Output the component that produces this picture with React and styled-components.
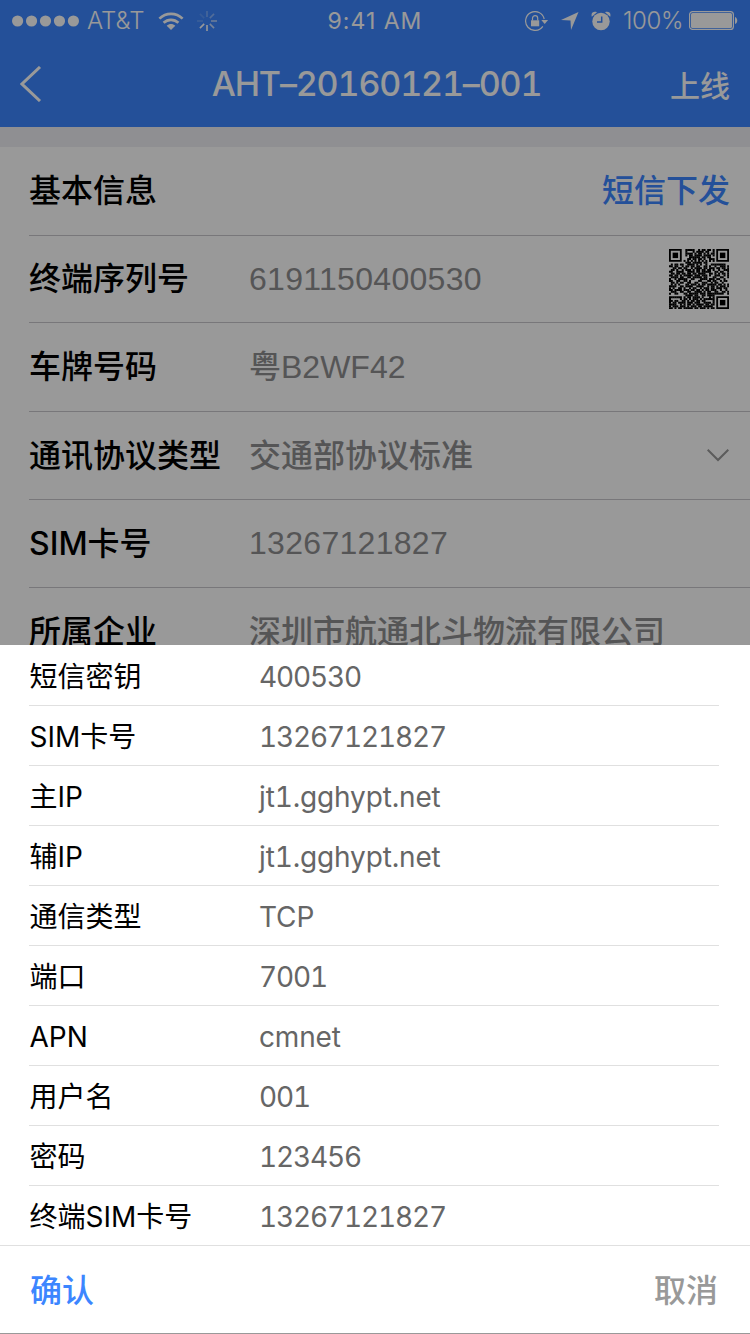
import React from 'react';
import styled, { createGlobalStyle } from 'styled-components';

const Global = createGlobalStyle`
  * { box-sizing: border-box; }
  body { margin: 0; background: #fff; }
  body, button { font-family: Inter, "Noto Sans CJK SC", sans-serif; }
`;

const Phone = styled.div`
  position: relative;
  width: 750px;
  height: 1334px;
  overflow: hidden;
  background: #fff;
`;

const Header = styled.header`
  height: 127px;
  background: #3c86ff;
  color: #fff;
`;

const StatusBar = styled.div`
  height: 40px;
  display: grid;
  grid-template-columns: 1fr auto 1fr;
  align-items: center;
  padding: 1px 12px 0;
  font-size: 24px;
  line-height: 38px;
`;

const Side = styled.div`
  display: flex;
  align-items: center;
  justify-content: ${(p) => (p.$end ? 'flex-end' : 'flex-start')};
`;

const Carrier = styled.span`
  font-weight: 300;
  margin: 0 14px 0 8px;
`;

const Clock = styled.span`
  font-weight: 400;
  font-size: 23px;
  letter-spacing: 1px;
`;

const Percent = styled.span`
  width: 61px;
  font-weight: 300;
  letter-spacing: -0.4px;
  white-space: nowrap;
  margin: 0 5px 0 12px;
`;

const NavBar = styled.div`
  height: 87px;
  display: grid;
  grid-template-columns: 1fr auto 1fr;
  align-items: center;
  padding: 0 20px;
`;

const Title = styled.h1`
  margin: 0 0 0 3px;
  font-size: 34px;
  font-weight: 500;
  line-height: 40px;
  font-variant-numeric: tabular-nums;
  letter-spacing: -1.15px;
`;

const NavAction = styled.button`
  justify-self: end;
  border: 0;
  padding: 0;
  background: none;
  color: #fff;
  font-size: 30px;
  font-weight: 500;
`;

const Details = styled.main`
  border-top: 20px solid #efeff4;
`;

const DetailRow = styled.div`
  height: ${(p) => p.$height || 88}px;
  margin-left: 29px;
  padding-right: 21px;
  display: flex;
  align-items: center;
  border-bottom: 1px solid #c8c7cc;
  font-size: 32px;
  line-height: 40px;
  white-space: nowrap;
`;

const DetailLabel = styled.span`
  width: 220px;
  font-weight: 500;
  color: #000;
`;

const DetailValue = styled.span`
  flex: 1;
  padding-bottom: ${(p) => (p.$numeric ? 1 : 0)}px;
  font-family: "Liberation Sans", "Noto Sans CJK SC", sans-serif;
  font-weight: ${(p) => (p.$numeric ? 400 : 500)};
  letter-spacing: ${(p) => (p.$numeric ? 0.3 : 0)}px;
  color: #8e8e90;
`;

const LinkButton = styled.button`
  margin: 0 -1px 0 auto;
  border: 0;
  padding: 0 0 7px;
  background: none;
  color: #3c86ff;
  font-size: 32px;
  font-weight: 500;
`;

const Backdrop = styled.div`
  position: absolute;
  inset: 0;
  background: rgba(0, 0, 0, 0.4);
`;

const Sheet = styled.section`
  position: absolute;
  left: 0;
  right: 0;
  bottom: 0;
  height: 689px;
  background: #fff;
  border-bottom: 1px solid #999;
`;

const SheetList = styled.div`
  padding: 1px 31px 0 29px;
`;

const SheetRow = styled.div`
  height: 60px;
  padding-top: 2px;
  display: flex;
  align-items: center;
  border-bottom: 1px solid #e0e0e0;
  font-size: 28px;
  line-height: 40px;
  &:last-child { border-bottom: 0; height: 59px; }
`;

const SheetLabel = styled.span`
  width: 230px;
  padding-left: 0.5px;
  color: #000;
`;

const SheetValue = styled.span`
  color: #666;
  font-variant-numeric: tabular-nums;
  letter-spacing: ${(p) => (p.$numeric ? -1.15 : -0.15)}px;
`;

const SheetFooter = styled.footer`
  height: 88px;
  padding: 0 32px 4px 30px;
  display: flex;
  align-items: center;
  justify-content: space-between;
  border-top: 1px solid #e0e0e0;
`;

const FooterButton = styled.button`
  border: 0;
  padding: 0;
  background: none;
  font-size: 32px;
  font-weight: 500;
  color: ${(p) => (p.$primary ? '#3c86ff' : '#999')};
`;

const SpinnerIcon = styled.svg`
  margin-left: 13px;
`;

const SpacedIcon = styled.svg`
  margin-left: 12px;
`;

const Signal = () => (
  <svg width="67" height="12" viewBox="0 0 67 12" fill="#fff">
    {[0, 1, 2, 3, 4].map((i) => <circle key={i} cx={5.6 + i * 13.95} cy="6" r="5.6" />)}
  </svg>
);

const Wifi = () => (
  <svg width="26" height="20" viewBox="0 0 26 20" fill="none" stroke="#fff" strokeWidth="2.7">
    <path d="M1.4 7.6C8 1.2 18 1.2 24.6 7.6" />
    <path d="M5.6 11.8c4.2-4 10.6-4 14.8 0" />
    <path d="M13 19l-4.300-4.300c2.500-2.200 6.100-2.200 8.600 0z" fill="#fff" stroke="none" />
  </svg>
);

const Spinner = () => (
  <SpinnerIcon width="20" height="20" viewBox="0 0 20 20" stroke="#fff" strokeWidth="1.6">
    {[0.3, 0.4, 0.6, 0.7, 1, 1, 0.2, 0.15].map((o, i) => (
      <path key={i} d="M10 0v6" opacity={o} transform={`rotate(${i * 45} 10 10)`} />
    ))}
  </SpinnerIcon>
);

const RotationLock = () => (
  <svg width="24" height="20" viewBox="0 0 24 20" fill="none" stroke="#fff" strokeWidth="1.2">
    <path d="M19.200 8A9.400 9.400 0 1 0 17.800 15.300" />
    <path d="M16.300 9h6.800l-3.400 4z" fill="#fff" stroke="none" />
    <path d="M6 9.300h8.200v6H6z" fill="#fff" stroke="none" />
    <path d="M7.500 9.500V7.200a2.600 2.600 0 0 1 5.200 0v2.300" />
  </svg>
);

const Location = () => (
  <SpacedIcon width="18" height="18" viewBox="0 0 18 18" fill="#fff">
    <path d="M17.500 0L10 18l-.5-9.500L0 8z" />
  </SpacedIcon>
);

const Alarm = () => (
  <SpacedIcon width="20" height="20" viewBox="0 0 20 20">
    <circle cx="10" cy="10.500" r="8.700" fill="#fff" />
    <path d="M.8 5.800C-.5 1.500 3 0 6 1.200M19.200 5.800C20.500 1.500 17 0 14 1.200" fill="#fff" />
    <path d="M10.700 5.500v5.500H6" fill="none" stroke="#3c86ff" strokeWidth="1.500" />
  </SpacedIcon>
);

const Battery = () => (
  <svg width="49" height="19" viewBox="0 0 49 19" fill="none">
    <rect x=".6" y=".6" width="43.800" height="17.800" rx="3" stroke="#fff" strokeWidth="1.200" />
    <rect x="2" y="2" width="41" height="15" rx="1.500" fill="#fff" />
    <path d="M46 6c3 1 3 6 0 7z" fill="#fff" />
  </svg>
);

const Back = () => (
  <svg width="22" height="36" viewBox="0 0 22 36" fill="none" stroke="#fff" strokeWidth="3">
    <path d="M20 1L2 18l18 17" />
  </svg>
);

const Chevron = () => (
  <svg width="22" height="14" viewBox="0 0 22 14" fill="none" stroke="#999" strokeWidth="2">
    <path d="M.7.7L11 11 21.300.7" />
  </svg>
);

const qrRows = [
  '#######..#####..#.##.##.#.#######',
  '#.....#..#...#.####.##..#.#.....#',
  '#.###.#..####.#.##.#.#.##.#.###.#',
  '#.###.#..#.##.####.####.#.#.###.#',
  '#.###.#....######.##.##...#.###.#',
  '#.....#...##.##.##.#..###.#.....#',
  '#######.#.#.#.#.#.#.#.#.#.#######',
  '.........###.#####.##............',
  '.#.##.##..####.#.#..#..########..',
  '##.##..#.##.##.##..##.#..#..###.#',
  '..##.##.##..#.####.##.###.##.##.#',
  '.##.#..#.###.#.##.##.##.#..#..###',
  '##..####..####.##.#####..##.##..#',
  '.##.##.##.##.##.####..##.#.#.##.#',
  '##.##.#.#####.###.###.#..###..#.#',
  '.####.##..##.#####.##...##..##..#',
  '#..#.#####..##...####.###.##..#..',
  '##..##..##.#....##...##.##..#.##.',
  '.##.#.##..##..##..###..#.##..#...',
  '.#.#.#...##.###.#.##.#####.##.#.#',
  '####..##.####..####..#.##.#.###.#',
  '#.#..##.#..#.##..#.###.##.###.##.',
  '##.####.###.##.##.#.##.###..#..#.',
  '.###..##..##..####.#.##..##..##.#',
  '#..##...##.#####.###.#########..#',
  '.........####.##..##.####...#.##.',
  '#######.#.##.####.#...#.#.#.##...',
  '#.....#.##.#.###.#.######...#.##.',
  '##.##..##.#.##.##.##....#########',
  '#.##.####.###.###..####.##.....##',
  '####..#.#.##.#.####.##.##.###.#.#',
  '#.###.###.#.###.##.#####..###.#.#',
  '##.#.##.#####.##.###.#.##.#######',
];

const finderAt = (x, y) => (
  <g key={`${x}-${y}`} transform={`translate(${x} ${y})`}>
    <path d="M0 0h7v7H0zM1 1v5h5V1z" fillRule="evenodd" />
    <path d="M2 2h3v3H2z" />
  </g>
);

const isFinderZone = (x, y) => (x < 8 && y < 8) || (x > 24 && y < 8) || (x > 24 && y > 24);

const QrCode = () => (
  <svg width="60" height="60" viewBox="0 0 33 33" fill="#000">
    {qrRows.map((row, y) => [...row].map((cell, x) => (
      cell === '#' && !isFinderZone(x, y) && <path key={`${x}-${y}`} d={`M${x} ${y}h1.100v1.100h-1.100z`} />
    )))}
    {[[0, 0], [26, 0], [26, 26]].map(([x, y]) => finderAt(x, y))}
  </svg>
);

const details = [
  { label: '终端序列号', value: '6191150400530', height: 87, icon: <QrCode /> },
  { label: '车牌号码', value: '粤B2WF42', height: 89 },
  { label: '通讯协议类型', value: '交通部协议标准', icon: <Chevron /> },
  { label: 'SIM卡号', value: '13267121827' },
  { label: '所属企业', value: '深圳市航通北斗物流有限公司' },
];

const fields = [
  ['短信密钥', '400530'],
  ['SIM卡号', '13267121827'],
  ['主IP', 'jt1.gghypt.net'],
  ['辅IP', 'jt1.gghypt.net'],
  ['通信类型', 'TCP'],
  ['端口', '7001'],
  ['APN', 'cmnet'],
  ['用户名', '001'],
  ['密码', '123456'],
  ['终端SIM卡号', '13267121827'],
];

const isNumeric = (text) => /^\d+$/.test(text);

export default function App() {
  return (
    <Phone>
      <Global />
      <Header>
        <StatusBar>
          <Side><Signal /><Carrier>AT&amp;T</Carrier><Wifi /><Spinner /></Side>
          <Clock>9:41 AM</Clock>
          <Side $end><RotationLock /><Location /><Alarm /><Percent>100%</Percent><Battery /></Side>
        </StatusBar>
        <NavBar>
          <Back />
          <Title>AHT–20160121–001</Title>
          <NavAction>上线</NavAction>
        </NavBar>
      </Header>
      <Details>
        <DetailRow $height={89}>
          <DetailLabel>基本信息</DetailLabel>
          <LinkButton>短信下发</LinkButton>
        </DetailRow>
        {details.map((d) => (
          <DetailRow key={d.label} $height={d.height}>
            <DetailLabel>{d.label}</DetailLabel>
            <DetailValue $numeric={isNumeric(d.value)}>{d.value}</DetailValue>
            {d.icon}
          </DetailRow>
        ))}
      </Details>
      <Backdrop />
      <Sheet>
        <SheetList>
          {fields.map(([label, value]) => (
            <SheetRow key={label}>
              <SheetLabel>{label}</SheetLabel>
              <SheetValue $numeric={isNumeric(value)}>{value}</SheetValue>
            </SheetRow>
          ))}
        </SheetList>
        <SheetFooter>
          <FooterButton $primary>确认</FooterButton>
          <FooterButton>取消</FooterButton>
        </SheetFooter>
      </Sheet>
    </Phone>
  );
}
